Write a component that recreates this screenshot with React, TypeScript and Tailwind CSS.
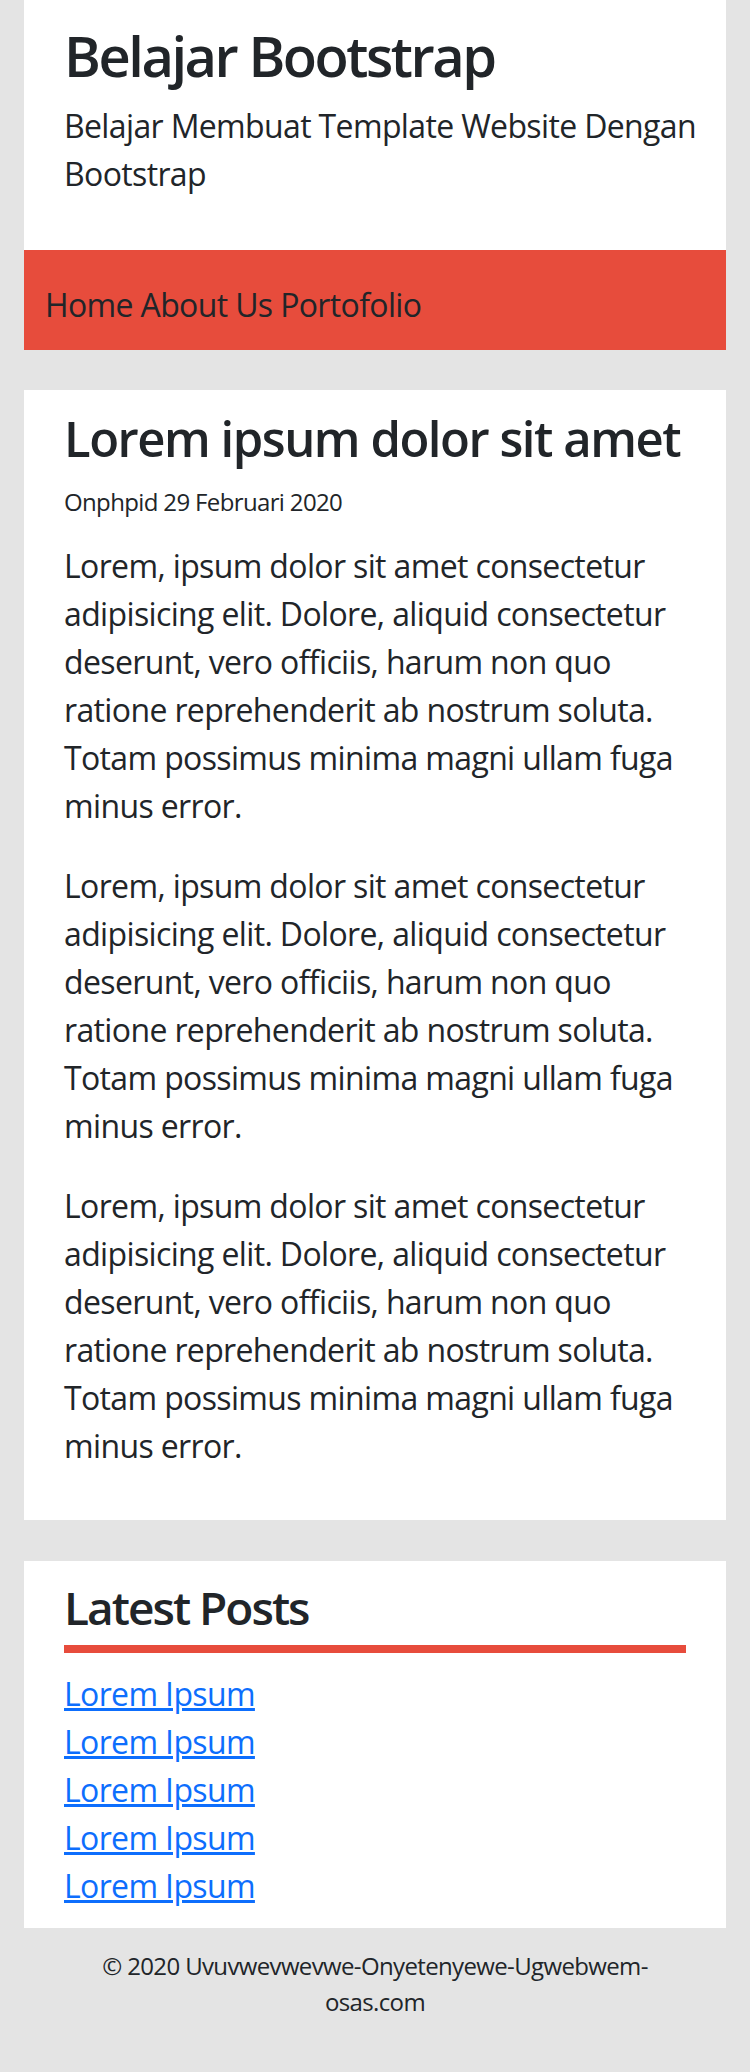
import React from "react";

// Simple blog layout: header, red nav, article card, latest posts, footer

const PARAGRAPH =
  "Lorem, ipsum dolor sit amet consectetur adipisicing elit. Dolore, aliquid consectetur deserunt, vero officiis, harum non quo ratione reprehenderit ab nostrum soluta. Totam possimus minima magni ullam fuga minus error.";

const LATEST_POSTS = ["Lorem Ipsum", "Lorem Ipsum", "Lorem Ipsum", "Lorem Ipsum", "Lorem Ipsum"];

const NAV_LINKS = ["Home", "About Us", "Portofolio"];

export default function App() {
  return (
    <div className="min-h-screen bg-[#e4e4e4] font-['Open_Sans',sans-serif] tracking-[-0.04em] text-[#212529]">
      <div className="mx-6">
        <header className="bg-white pl-10 pr-4 pt-[22px] pb-[52px]">
          <h1 className="mb-[13px] text-[56px] font-semibold leading-[1.2] tracking-[-0.044em]">Belajar Bootstrap</h1>
          <p className="text-[32px] leading-[48px]">Belajar Membuat Template Website Dengan Bootstrap</p>
        </header>

        <nav className="h-[100px] bg-[#e74c3c] pl-[21px] pt-[31px] text-[32px] leading-[48px]">
          {NAV_LINKS.map((link, i) => (
            <React.Fragment key={link}>
              <a href="#" className="text-[#212529]">{link}</a>
              {i < NAV_LINKS.length - 1 && " "}
            </React.Fragment>
          ))}
        </nav>

        <article className="mt-10 bg-white px-10 pt-[19px] pb-[18px]">
          <h2 className="mb-4 text-[49px] font-semibold leading-[1.2] tracking-[-0.03em]">Lorem ipsum dolor sit amet</h2>
          <p className="mb-[22px] text-[24px] leading-[36px]">Onphpid 29 Februari 2020</p>
          {[0, 1, 2].map((i) => (
            <p key={i} className="mb-8 text-[32px] leading-[48px]">{PARAGRAPH}</p>
          ))}
        </article>

        <aside className="mt-[41px] bg-white px-10 pt-[19px] pb-[18px]">
          <h3 className="mb-[17px] border-b-8 border-[#e74c3c] pb-[10px] text-[46px] font-semibold leading-[1.2] tracking-[-0.043em]">
            Latest Posts
          </h3>
          <ul>
            {LATEST_POSTS.map((post, i) => (
              <li key={i} className="text-[32px] leading-[48px]">
                <a href="#" className="text-[#0d6efd] underline">{post}</a>
              </li>
            ))}
          </ul>
        </aside>

        <footer className="px-10 pt-5 pb-10 text-center text-[24px] leading-[36px]">
          © 2020 Uvuvwevwevwe-Onyetenyewe-Ugwebwem-osas.com
        </footer>
      </div>
    </div>
  );
}
